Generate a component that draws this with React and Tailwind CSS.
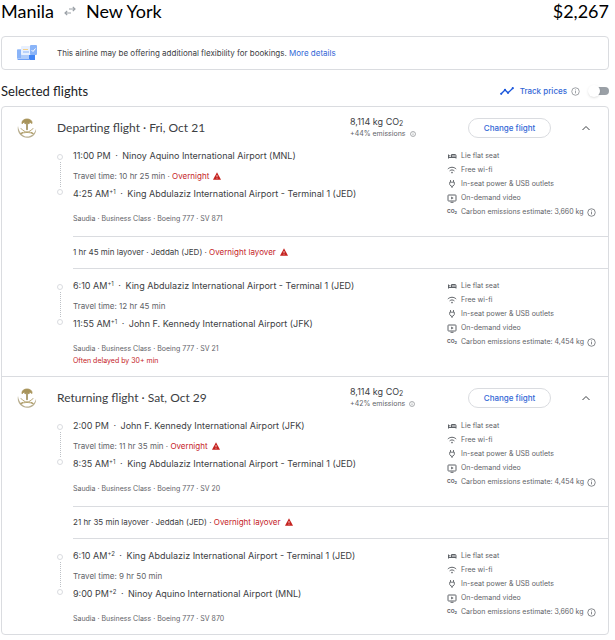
import { useState } from 'react'

const trips = [
    {
        id: 'departing',
        title: 'Departing flight',
        date: 'Fri, Oct 21',
        emissions: '+44% emissions',
        layover: '1 hr 45 min layover · Jeddah (JED) · ',
        legs: [
            {
                from: { time: '11:00 PM', airport: 'Ninoy Aquino International Airport (MNL)' },
                to: { time: '4:25 AM', day: '+1', airport: 'King Abdulaziz International Airport - Terminal 1 (JED)' },
                duration: '10 hr 25 min',
                overnight: true,
                flight: 'SV 871',
                carbon: '3,660 kg',
            },
            {
                from: { time: '6:10 AM', day: '+1', airport: 'King Abdulaziz International Airport - Terminal 1 (JED)' },
                to: { time: '11:55 AM', day: '+1', airport: 'John F. Kennedy International Airport (JFK)' },
                duration: '12 hr 45 min',
                flight: 'SV 21',
                delay: 'Often delayed by 30+ min',
                carbon: '4,454 kg',
            },
        ],
    },
    {
        id: 'returning',
        title: 'Returning flight',
        date: 'Sat, Oct 29',
        emissions: '+42% emissions',
        layover: '21 hr 35 min layover · Jeddah (JED) · ',
        legs: [
            {
                from: { time: '2:00 PM', airport: 'John F. Kennedy International Airport (JFK)' },
                to: { time: '8:35 AM', day: '+1', airport: 'King Abdulaziz International Airport - Terminal 1 (JED)' },
                duration: '11 hr 35 min',
                overnight: true,
                flight: 'SV 20',
                carbon: '4,454 kg',
            },
            {
                from: { time: '6:10 AM', day: '+2', airport: 'King Abdulaziz International Airport - Terminal 1 (JED)' },
                to: { time: '9:00 PM', day: '+2', airport: 'Ninoy Aquino International Airport (MNL)' },
                duration: '9 hr 50 min',
                flight: 'SV 870',
                carbon: '3,660 kg',
            },
        ],
    },
]

const InfoIcon = ({ className }) => (
    <svg viewBox="0 0 24 24" className={className} fill="none" stroke="currentColor" strokeWidth="2">
        <circle cx="12" cy="12" r="10" />
        <path d="M12 10.5V17M12 6.5V9" />
    </svg>
)

const WarningIcon = () => (
    <svg viewBox="0 0 24 24" className="inline-block w-2 h-2 ml-1 align-[-1px]">
        <path d="M0 23h24L12 1z" fill="#c5221f" />
        <path d="M12 9v6M12 17v3" stroke="#fff" strokeWidth="2" />
    </svg>
)

const SwapIcon = () => (
    <svg viewBox="0 0 12 10" className="w-3 h-[10px] text-[#9aa0a6]" fill="none" stroke="currentColor" strokeWidth="1.2">
        <path d="M5 3h6M8.800 .8L11 3 8.800 5.200M7 7H1M3.200 4.800L1 7l2.200 2.200" />
    </svg>
)

const TicketIcon = () => (
    <svg viewBox="0 0 20 16" className="w-5 h-4">
        <rect x="0" y="4" width="17" height="11" rx="1" fill="#aecbfa" />
        <path d="M0 5h4v8H0z" fill="#8ab4f8" />
        <path d="M12 10h6v5h-6z" fill="#4285f4" />
        <path d="M1 14.500h12" stroke="#6ea1f7" />
        <rect x="4" y="1" width="10" height="9" rx="1" fill="#e8f0fe" />
        <rect x="13" y="0" width="7" height="10" rx="1" fill="#8ab4f8" />
        <path d="M6 4.500h5" stroke="#f5cf86" />
        <path d="M6 7h6" stroke="#8ab4f8" />
        <path d="M14.500 5l1.500 1.500 2.500-3" stroke="#fff" fill="none" />
    </svg>
)

// Palm tree over two crossed swords, with a crescent under them
const SaudiaLogo = () => (
    <svg viewBox="0 0 20 20" className="w-5 h-5" fill="none" strokeLinecap="round">
        <path d="M1 8C-.4 14 4 19.800 10 19.800S19.600 15 19 11c-1.200 4.400-4.600 7.600-9 7.600S1.800 14 1 8z" fill="#b8ae8f" />
        <path d="M10 4v7.500" stroke="#8f7a3c" strokeWidth="1.400" />
        <path d="M5 5.500C4.600 2.600 7 1 10 1s5.400 1.600 5 4.500L12.500 4 12 6l-2-1.500L8 6l-.5-2z" fill="#a8945a" stroke="#a8945a" strokeWidth=".8" />
        <path d="M4 10.500c2 3 6 4.200 11 4.500M16 10.500c-2 3-6 4.200-11 4.500" stroke="#a8945a" strokeWidth=".9" />
        <path d="M4 15.500l1.500-.8M16 15.500l-1.500-.8" stroke="#a8945a" strokeWidth="1.100" />
    </svg>
)

const SeatIcon = () => (
    <svg viewBox="0 0 10 8" className="w-[10px] h-2" fill="none" stroke="currentColor" strokeWidth="1">
        <path d="M1.500 2.500v4M1.500 5.500h7.500M9 6.500V3.500a1 1 0 0 0-1-1H4.500v3" />
        <path d="M2 3.800h1.500M5 4h3.500" />
    </svg>
)

const WifiIcon = () => (
    <svg viewBox="0 0 10 8" className="w-[10px] h-2" fill="none" stroke="currentColor" strokeWidth="1">
        <path d="M.8 3C3.200.7 6.800.7 9.200 3M2.600 4.900c1.400-1.300 3.400-1.300 4.800 0" />
        <circle cx="5" cy="6.600" r=".8" fill="currentColor" stroke="none" />
    </svg>
)

const PlugIcon = () => (
    <svg viewBox="0 0 10 10" className="w-[10px] h-[10px]" fill="none" stroke="currentColor" strokeWidth=".9">
        <path d="M3.500 1v2M6.500 1v2M2.700 3.200h4.600v2.300L6 7.200H4L2.700 5.500zM5 7.200V9" />
    </svg>
)

const VideoIcon = () => (
    <svg viewBox="0 0 10 9" className="w-[10px] h-[9px]" fill="none" stroke="currentColor" strokeWidth="1">
        <rect x="1" y="1" width="8" height="6" rx=".6" />
        <path d="M3.500 8.300h3" />
        <path d="M4.200 2.600v2.800L6.600 4z" fill="currentColor" stroke="none" />
    </svg>
)

const Amenity = ({ icon, children }) => (
    <li className="flex items-center h-[14px] whitespace-nowrap">
        <span className="w-[14px] flex items-center">{icon}</span>
        {children}
    </li>
)

const Stop = ({ time, day, airport }) => (
    <p className="h-4 leading-4 text-[9px] text-[#3c4043]">
        {time}
        {day && <sup className="text-[6px] leading-none">{day}</sup>}
        <span className="mx-[2px]"> · </span>
        {airport}
    </p>
)

const Leg = ({ leg }) => (
    <div className="flex text-[#5f6368]">
        <div className="w-[55px] shrink-0" />
        {/* Timeline */}
        <div className="w-[6px] h-[41px] mt-[6px] mr-[10px] shrink-0 flex flex-col items-center">
            <span className="w-[6px] h-[6px] rounded-full border border-[#dadce0]" />
            <span className="flex-1 my-[2px] border-l border-dotted border-[#bdc1c6]" />
            <span className="w-[6px] h-[6px] rounded-full border border-[#dadce0]" />
        </div>
        <div className="flex-1 min-w-0">
            <Stop {...leg.from} />
            <p className="h-4 leading-4 mt-1 mb-[2px] text-[8px]">
                Travel time: {leg.duration}
                {leg.overnight && (
                    <>
                        {' · '}
                        <span className="text-[#c5221f]">Overnight</span>
                        <WarningIcon />
                    </>
                )}
            </p>
            <Stop {...leg.to} />
            <p className="mt-[11px] text-[7px] leading-3">Saudia · Business Class · Boeing 777 · {leg.flight}</p>
            {leg.delay && <p className="text-[7px] leading-3 text-[#c5221f]">{leg.delay}</p>}
        </div>
        <ul className="w-[161px] shrink-0 pt-px text-[7px]">
            <Amenity icon={<SeatIcon />}>Lie flat seat</Amenity>
            <Amenity icon={<WifiIcon />}>Free wi-fi</Amenity>
            <Amenity icon={<PlugIcon />}>In-seat power &amp; USB outlets</Amenity>
            <Amenity icon={<VideoIcon />}>On-demand video</Amenity>
            <Amenity icon={<span className="text-[5px] font-bold">CO<sub className="text-[4px]">2</sub></span>}>
                Carbon emissions estimate: {leg.carbon}
                <InfoIcon className="w-[9px] h-[9px] ml-[3px]" />
            </Amenity>
        </ul>
    </div>
)

const Trip = ({ trip }) => {
    const [open, setOpen] = useState(true)

    return (
        <section className="border-b border-[#dadce0] last:border-b-0 pb-[9px]">
            <div className="flex items-center h-[41px] pl-[15px] pr-[17px]">
                <SaudiaLogo />
                <h3 className="flex-1 ml-5 text-[12px] leading-4 text-[#3c4043] font-['Lato',sans-serif]">
                    {trip.title} · {trip.date}
                </h3>
                <div className="w-[118px]">
                    <p className="text-[9px] leading-3 text-[#3c4043]">
                        8,114 kg CO<sub className="text-[7px] leading-none">2</sub>
                    </p>
                    <p className="flex items-center text-[7px] leading-3 text-[#5f6368]">
                        {trip.emissions}
                        <InfoIcon className="w-[6px] h-[6px] ml-1" />
                    </p>
                </div>
                <button className="w-[83px] h-5 mr-[30px] rounded-full border border-[#dadce0] text-[8px] font-medium text-[#3367d6] cursor-pointer">
                    Change flight
                </button>
                <button
                    aria-label={open ? 'Collapse' : 'Expand'}
                    aria-expanded={open}
                    onClick={() => setOpen(!open)}
                    className="cursor-pointer text-[#3c4043]"
                >
                    <svg viewBox="0 0 10 10" className={`w-[10px] h-[10px] ${open ? '' : 'rotate-180'}`} fill="none" stroke="currentColor">
                        <path d="M1.500 7L5 3.500 8.500 7" />
                    </svg>
                </button>
            </div>
            {open && (
                <>
                    <Leg leg={trip.legs[0]} />
                    {/* Layover */}
                    <p className="ml-[71px] mt-[11px] mb-[9px] h-[33px] leading-[31px] border-y border-[#dadce0] text-[8px] text-[#3c4043]">
                        {trip.layover}
                        <span className="text-[#c5221f]">Overnight layover</span>
                        <WarningIcon />
                    </p>
                    <Leg leg={trip.legs[1]} />
                </>
            )}
        </section>
    )
}

export default function App() {
    const [tracking, setTracking] = useState(false)

    return (
        <main className="min-h-screen bg-white pl-px pr-[6px] pb-[5px] font-['Inter',sans-serif]">
            <header className="flex items-center justify-between h-[22px] text-[18px] leading-[22px] text-black font-['Lato',sans-serif]">
                <h1 className="flex items-center gap-[10px]">
                    Manila <SwapIcon /> New York
                </h1>
                <span>$2,267</span>
            </header>

            <div className="flex items-center h-[34px] mt-[14px] pl-[15px] rounded-sm border border-[#dadce0] text-[8px] text-[#3c4043]">
                <TicketIcon />
                <p className="ml-5">
                    This airline may be offering additional flexibility for bookings.{' '}
                    <a href="#details" className="text-[#3367d6]">More details</a>
                </p>
            </div>

            <div className="flex items-center justify-between h-9">
                <h2 className="mt-[6px] text-[13px] leading-4 text-[#202124] font-['Lato',sans-serif]">Selected flights</h2>
                <div className="flex items-center mt-[6px]">
                    <svg viewBox="0 0 14 8" className="w-[14px] h-2 text-[#1a56db]" fill="none" stroke="currentColor" strokeWidth="1.300">
                        <path d="M1.200 6.800L5 3l3 2.800L12.800 1.200" />
                        <g fill="currentColor" stroke="none">
                            <circle cx="1.200" cy="6.800" r="1.100" />
                            <circle cx="5" cy="2.800" r="1.100" />
                            <circle cx="8" cy="5.800" r="1.100" />
                            <circle cx="12.800" cy="1.200" r="1.100" />
                        </g>
                    </svg>
                    <label htmlFor="track" className="ml-[6px] text-[8px] font-medium text-[#3367d6]">Track prices</label>
                    <InfoIcon className="w-[9px] h-[9px] ml-1 text-[#80868b]" />
                    <span className="relative ml-2 w-[21px] h-3 flex items-center justify-end">
                        <input
                            id="track"
                            type="checkbox"
                            role="switch"
                            checked={tracking}
                            onChange={(e) => setTracking(e.target.checked)}
                            className="peer appearance-none w-[18px] h-2 rounded-full bg-[#9aa0a6] checked:bg-[#8ab4f8] cursor-pointer"
                        />
                        <span className="absolute left-0 top-0 w-3 h-3 rounded-full bg-white shadow pointer-events-none peer-checked:left-[9px]" />
                    </span>
                </div>
            </div>

            <div className="rounded-sm border border-[#dadce0]">
                {trips.map((trip) => (
                    <Trip key={trip.id} trip={trip} />
                ))}
            </div>
        </main>
    )
}
